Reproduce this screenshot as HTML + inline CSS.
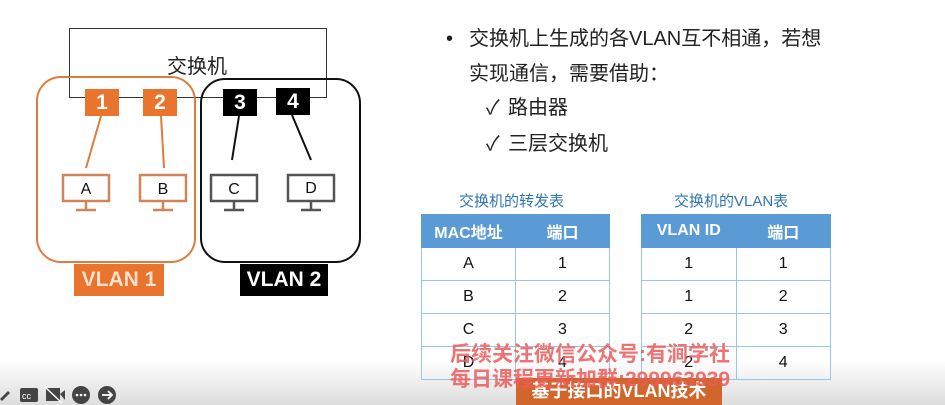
<!DOCTYPE html>
<html><head><meta charset="utf-8"><style>
body{margin:0;width:945px;height:405px;overflow:hidden;background:#fff;font-family:"Liberation Sans","Noto Sans CJK SC",sans-serif;position:relative}
.a{position:absolute}
.port{position:absolute;width:34px;height:27px;color:#fff;font-weight:bold;font-size:21px;text-align:center;line-height:27px}
table{position:absolute;border-collapse:collapse;font-size:16px}
td{height:32px;padding:0;border:1px solid #9dc3e6;text-align:center;width:50%;color:#111}
th{height:32px;padding:0;background:#5b9bd5;color:#fff;font-size:16px;border:1px solid #5b9bd5}
.tt{position:absolute;color:#2e75b6;font-size:15px}
.wm{position:absolute;color:rgba(235,90,90,.85);font-size:21px;font-weight:bold}
</style></head><body>
<div class="a" style="left:0;top:360px;width:945px;height:45px;background:linear-gradient(#fff,#ddd)"></div>
<svg class="a" style="left:0;top:0" width="400" height="310">
<rect x="69.5" y="28.5" width="257" height="69" fill="none" stroke="#333"/>
<rect x="37" y="77" width="158" height="185" rx="24" fill="none" stroke="#e07b3f" stroke-width="2"/>
<rect x="201" y="79" width="159" height="183" rx="24" fill="none" stroke="#111" stroke-width="2"/>
<g stroke-width="2"><line x1="101" y1="116" x2="86" y2="168" stroke="#e07b3f"/><line x1="161" y1="116" x2="164" y2="168" stroke="#e07b3f"/>
<line x1="239" y1="116" x2="232" y2="160" stroke="#111"/><line x1="292" y1="115" x2="311" y2="160" stroke="#111"/></g>
<g fill="none" stroke-width="2.5">
<g stroke="#d0845a"><rect x="63" y="175" width="46" height="26"/><path d="M86 201v8M76 210h20"/><rect x="140" y="175" width="46" height="26"/><path d="M163 201v8M153 210h20"/></g>
<g stroke="#555"><rect x="211" y="175" width="46" height="26"/><path d="M234 201v8M224 210h20"/><rect x="288" y="175" width="46" height="26"/><path d="M311 201v8M301 210h20"/></g></g>
<g font-size="16" text-anchor="middle" fill="#111"><text x="86" y="194">A</text><text x="163" y="194">B</text><text x="234" y="194">C</text><text x="311" y="193">D</text></g>
</svg>
<div class="a" style="left:167px;top:50px;font-size:20px;color:#222">交换机</div>
<div class="port" style="left:85px;top:89px;background:#e8742e">1</div>
<div class="port" style="left:143px;top:89px;background:#e8742e">2</div>
<div class="port" style="left:223px;top:89px;background:#000">3</div>
<div class="port" style="left:276px;top:88px;background:#000">4</div>
<div class="a" style="left:74px;top:264px;width:90px;height:32px;background:#e8742e;color:#fbe0cc;font-size:21px;font-weight:bold;text-align:center;line-height:32px">VLAN 1</div>
<div class="a" style="left:240px;top:264px;width:88px;height:32px;background:#000;color:#fff;font-size:21px;font-weight:bold;text-align:center;line-height:32px">VLAN 2</div>
<div class="a" style="left:446px;top:21px;font-size:20px;color:#222;line-height:36px">•</div>
<div class="a" style="left:469px;top:21px;font-size:20px;color:#222;line-height:36px">交换机上生成的各VLAN互不相通，若想</div>
<div class="a" style="left:469px;top:56px;font-size:20px;color:#222;line-height:36px">实现通信，需要借助：</div>
<div class="a" style="left:486px;top:90px;font-size:20px;color:#222;line-height:36px">✓</div>
<div class="a" style="left:486px;top:126px;font-size:20px;color:#222;line-height:36px">✓</div>
<div class="a" style="left:508px;top:90px;font-size:20px;color:#222;line-height:36px">路由器<br>三层交换机</div>
<div class="tt" style="left:459px;top:190px">交换机的转发表</div>
<div class="tt" style="left:674px;top:190px">交换机的VLAN表</div>
<table style="left:421px;top:214px;width:189px"><tr><th>MAC地址</th><th>端口</th></tr><tr><td>A</td><td>1</td></tr><tr><td>B</td><td>2</td></tr><tr><td>C</td><td>3</td></tr><tr><td>D</td><td>4</td></tr></table>
<table style="left:641px;top:214px;width:190px"><tr><th>VLAN ID</th><th>端口</th></tr><tr><td>1</td><td>1</td></tr><tr><td>1</td><td>2</td></tr><tr><td>2</td><td>3</td></tr><tr><td>2</td><td>4</td></tr></table>
<div class="a" style="left:516px;top:378px;width:206px;height:27px;background:#d0662c;color:#fff;font-size:18px;font-weight:bold;text-align:center;line-height:27px">基于接口的VLAN技术</div>
<div class="wm" style="left:450px;top:338px">后续关注微信公众号:有涧学社</div>
<div class="wm" style="left:450px;top:363px">每日课程更新加群:299963939</div>
<svg class="a" style="left:0;top:383px" width="120" height="22">
<path d="M0 16l8-8 2 2-8 8z" fill="#444"/>
<rect x="20" y="5" width="18" height="14" rx="2" fill="#444"/><text x="22" y="16" font-size="9" fill="#fff" font-family="Liberation Sans">cc</text>
<rect x="46" y="5" width="14" height="13" fill="#444"/><path d="M60 11l5-4v10z" fill="#444"/><line x1="45" y1="4" x2="62" y2="20" stroke="#fff" stroke-width="1.5"/>
<circle cx="81" cy="12" r="9" fill="#444"/><g fill="#fff"><circle cx="77" cy="12" r="1.3"/><circle cx="81" cy="12" r="1.3"/><circle cx="85" cy="12" r="1.3"/></g>
<circle cx="107" cy="12" r="9" fill="#444"/><path d="M102 12h9M108 8l4 4-4 4" stroke="#fff" stroke-width="1.8" fill="none"/>
</svg>
</body></html>
